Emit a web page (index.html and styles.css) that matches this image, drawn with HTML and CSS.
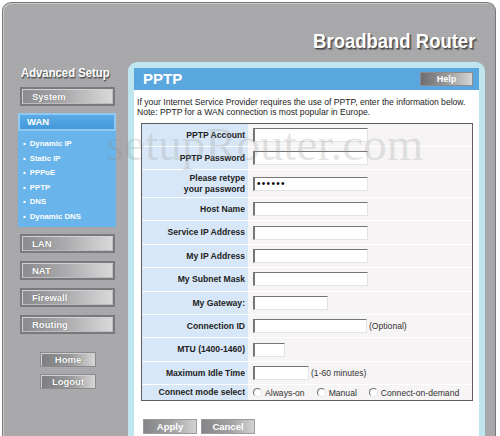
FILE: index.html
```html
<!DOCTYPE html>
<html>
<head>
<meta charset="utf-8">
<title>PPTP</title>
<link rel="stylesheet" href="styles.css">
</head>
<body>
<div class="frame">
  <header class="top"><h1 class="brand">Broadband Router</h1></header>
  <div class="content">
    <nav class="side">
      <div class="side-title">Advanced Setup</div>
      <div class="navbtn first">System</div>
      <div class="wan">
        <div class="wan-tab">WAN</div>
        <ul class="submenu">
          <li>Dynamic IP</li>
          <li>Static IP</li>
          <li>PPPoE</li>
          <li>PPTP</li>
          <li>DNS</li>
          <li>Dynamic DNS</li>
        </ul>
      </div>
      <div class="navbtn after-wan">LAN</div>
      <div class="navbtn">NAT</div>
      <div class="navbtn">Firewall</div>
      <div class="navbtn">Routing</div>
      <div class="smallbtn home">Home</div>
      <div class="smallbtn">Logout</div>
    </nav>
    <main class="panel">
      <div class="panel-bar">
        <span class="panel-title">PPTP</span>
        <span class="help">Help</span>
      </div>
      <p class="intro">If your Internet Service Provider requires the use of PPTP, enter the information below.<br>Note: PPTP for a WAN connection is most popular in Europe.</p>
      <div class="form">
        <div class="lbl">PPTP Account</div>
        <div class="val"><input class="field w-full" type="text"></div>
        <div class="lbl">PPTP Password</div>
        <div class="val"><input class="field w-full" type="password"></div>
        <div class="lbl">Please retype<br>your password</div>
        <div class="val"><input class="field w-full pw" type="password" value="123456"></div>
        <div class="lbl">Host Name</div>
        <div class="val"><input class="field w-full" type="text"></div>
        <div class="lbl">Service IP Address</div>
        <div class="val"><input class="field w-full" type="text"></div>
        <div class="lbl">My IP Address</div>
        <div class="val"><input class="field w-full" type="text"></div>
        <div class="lbl">My Subnet Mask</div>
        <div class="val"><input class="field w-full" type="text"></div>
        <div class="lbl">My Gateway:</div>
        <div class="val"><input class="field w-gw" type="text"></div>
        <div class="lbl">Connection ID</div>
        <div class="val"><input class="field w-id" type="text"><span class="hint">(Optional)</span></div>
        <div class="lbl">MTU (1400-1460)</div>
        <div class="val"><input class="field w-mtu" type="text"></div>
        <div class="lbl">Maximum Idle Time</div>
        <div class="val"><input class="field w-idle" type="text"><span class="hint">(1-60 minutes)</span></div>
        <div class="lbl">Connect mode select</div>
        <div class="val radios">
          <span class="opt"><span class="radio"></span>Always-on</span>
          <span class="opt"><span class="radio"></span>Manual</span>
          <span class="opt"><span class="radio"></span>Connect-on-demand</span>
        </div>
      </div>
      <div class="actions">
        <span class="btn">Apply</span>
        <span class="btn">Cancel</span>
      </div>
    </main>
  </div>
</div>
<div class="watermark">setupRouter.com</div>
</body>
</html>
```
FILE: styles.css
```css
html, body {
  margin: 0;
  padding: 0;
  overflow: hidden;
  background: #fff;
}
body {
  width: 500px;
  height: 436px;
  position: relative;
  font-family: "Liberation Sans", Arial, sans-serif;
}
.frame {
  margin: 2px 0 0 2px;
  width: 494px;
  height: 440px;
  box-sizing: border-box;
  border: 1px solid #77777a;
  border-bottom: none;
  border-radius: 9px 9px 0 0;
  background: repeating-linear-gradient(180deg, #ababae 0 1px, #a6a6a9 1px 2px);
  box-shadow: inset 1px 1px 0 #cacacd;
}
.top {
  height: 59px;
  box-sizing: border-box;
  padding: 27px 20px 0 0;
  text-align: right;
}
.brand {
  display: inline-block;
  margin: 0;
  font-size: 21px;
  line-height: 21px;
  font-weight: bold;
  color: #fff;
  transform: scaleX(0.88);
  transform-origin: right center;
  text-shadow: 1px 1px 0 #4a4a4a, 2px 2px 1px #6a6a6a;
}
.content {
  display: flex;
  height: 376px;
}
.side {
  width: 125px;
  flex: none;
  display: flex;
  flex-direction: column;
}
.side-title {
  margin: 4px 0 0 18px;
  font-size: 13px;
  line-height: 14px;
  font-weight: bold;
  color: #fff;
  white-space: nowrap;
  transform: scaleX(0.87);
  transform-origin: left center;
  text-shadow: 1px 1px 0 #555, 1px 2px 1px #777;
}
.navbtn {
  margin: 8px 0 0 17px;
  width: 95px;
  height: 19px;
  box-sizing: border-box;
  border: 2px solid #7a7a7e;
  background: linear-gradient(90deg, #8b8b8e 0%, #a9a9ab 45%, #dadadb 100%);
  box-shadow: inset 1px 1px 0 #d2d2d4, inset -1px -1px 0 #bcbcbe;
  color: #fff;
  font-size: 9.5px;
  font-weight: bold;
  line-height: 15px;
  padding-left: 10px;
  text-shadow: 0 0 1px #555;
}
.navbtn.first { margin-top: 7px; }
.navbtn.after-wan { margin-top: 7px; }
.wan {
  margin: 7px 0 0 15px;
  width: 98px;
}
.wan-tab {
  height: 18px;
  box-sizing: border-box;
  border: 2px solid #8fcaf2;
  background: linear-gradient(180deg, #5aaae6, #4598da);
  color: #fff;
  font-size: 9.5px;
  font-weight: bold;
  line-height: 14px;
  padding-left: 7px;
}
.submenu {
  list-style: none;
  margin: 0;
  height: 96px;
  box-sizing: border-box;
  padding: 6px 0 0 5px;
  background: #69b4eb;
}
.submenu li {
  line-height: 14.6px;
  font-size: 7.8px;
  font-weight: bold;
  color: #fff;
  white-space: nowrap;
}
.submenu li::before {
  content: "\2022";
  margin-right: 4px;
}
.smallbtn {
  margin: 7px 0 0 37px;
  width: 56px;
  height: 15px;
  box-sizing: border-box;
  border: 1px solid #8a8a8d;
  background: linear-gradient(90deg, #7d7d80 0%, #9a9a9c 55%, #d6d6d7 100%);
  box-shadow: inset 1px 1px 0 #cfcfd1;
  color: #fff;
  font-size: 9.5px;
  font-weight: bold;
  line-height: 13px;
  text-align: center;
  text-shadow: 0 0 1px #444;
}
.smallbtn.home { margin-top: 18px; }
.panel {
  width: 357px;
  flex: none;
  box-sizing: border-box;
  border: 6px solid #bfe5ee;
  border-bottom: none;
  border-radius: 9px 9px 0 0;
  background: #fff;
}
.panel-bar {
  height: 22px;
  box-sizing: border-box;
  display: flex;
  align-items: center;
  justify-content: space-between;
  padding: 0 6px 0 9px;
  background: #5aa6df;
}
.panel-title {
  color: #fff;
  font-size: 15px;
  font-weight: bold;
  line-height: 22px;
}
.help {
  width: 53px;
  height: 14px;
  box-sizing: border-box;
  border: 1px solid #8c8c8c;
  background: linear-gradient(90deg, #6e6e70 0%, #9a9a9c 50%, #d6d6d7 100%);
  color: #fff;
  font-size: 9px;
  font-weight: bold;
  line-height: 12px;
  text-align: center;
}
.intro {
  margin: 0;
  padding: 8px 0 0 3px;
  font-size: 8.6px;
  line-height: 9.5px;
  color: #222;
  white-space: nowrap;
}
.form {
  margin: 6px 6px 0 7px;
  display: grid;
  grid-template-columns: 106px minmax(0, 1fr);
  grid-template-rows: 22px 22px 27px repeat(8, 22.4px) 15px;
  row-gap: 1px;
  background: #fff;
  border: 1px solid #5e5e60;
  overflow: hidden;
}
.lbl {
  background: #d8e7f7;
  display: flex;
  align-items: center;
  justify-content: flex-end;
  text-align: right;
  padding-right: 3px;
  font-size: 8.6px;
  line-height: 10.5px;
  font-weight: bold;
  color: #222;
  white-space: nowrap;
}
.val {
  background: #f6f4f4;
  display: flex;
  align-items: center;
  padding-left: 5px;
  gap: 2px;
  font-size: 8.6px;
  color: #333;
  min-width: 0;
}
.field {
  box-sizing: border-box;
  height: 14px;
  margin: 0;
  padding: 0 3px;
  border: 1px solid;
  border-left-width: 2px;
  border-color: #757577 #e4e4e4 #e4e4e4 #757577;
  background: #fff;
  font-family: "Liberation Sans", Arial, sans-serif;
  font-size: 8px;
  outline: none;
}
.field.pw {
  font-size: 10px;
  letter-spacing: 1.3px;
  padding: 0 2px;
  color: #000;
}
.w-full { width: 115px; }
.w-gw { width: 75px; }
.w-id { width: 114px; }
.w-mtu { width: 32px; }
.w-idle { width: 56px; }
.hint { white-space: nowrap; }
.radios { gap: 0; }
.opt {
  display: inline-flex;
  align-items: center;
  gap: 3px;
  margin-right: 12px;
  white-space: nowrap;
}
.opt:last-child { margin-right: 0; }
.radio {
  width: 7px;
  height: 7px;
  border-radius: 50%;
  border: 1px solid;
  border-color: #707072 #e6e6e6 #e6e6e6 #707072;
  background: #fff;
}
.actions {
  margin: 18px 0 0 9px;
  display: flex;
  gap: 4px;
}
.btn {
  width: 54px;
  height: 15px;
  box-sizing: border-box;
  border: 1px solid #9a9a9c;
  background: linear-gradient(90deg, #858587 0%, #a3a3a5 55%, #d2d2d3 100%);
  color: #fff;
  font-size: 9.5px;
  font-weight: bold;
  line-height: 13px;
  text-align: center;
}
.watermark {
  position: absolute;
  left: 106px;
  top: 121px;
  font-family: "Liberation Serif", "Times New Roman", serif;
  font-size: 47px;
  line-height: 46px;
  color: rgba(140, 140, 140, 0.22);
  pointer-events: none;
  white-space: nowrap;
}
```
